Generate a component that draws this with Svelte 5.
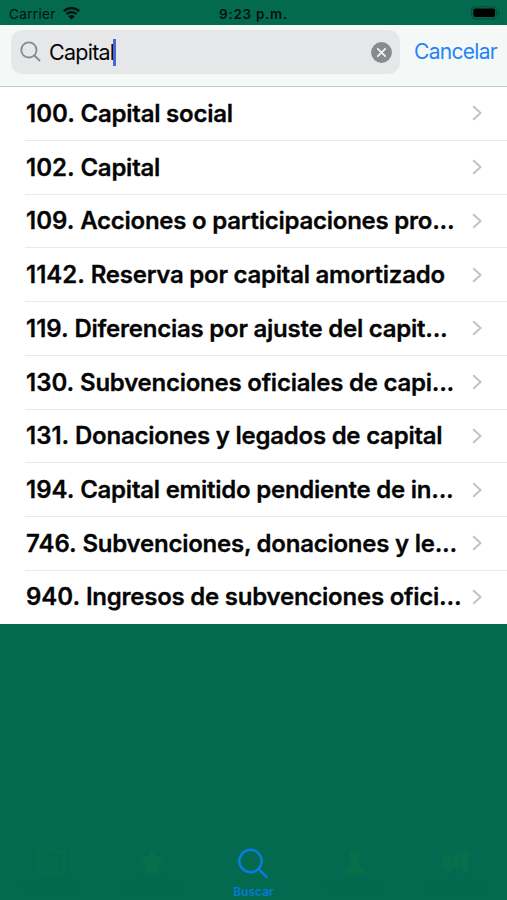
<script lang="ts">
	let query = 'Capital';

	const accounts = [
		{ code: '100.', name: 'Capital social' },
		{ code: '102.', name: 'Capital' },
		{ code: '109.', name: 'Acciones o participaciones pro...' },
		{ code: '1142.', name: 'Reserva por capital amortizado' },
		{ code: '119.', name: 'Diferencias por ajuste del capit...' },
		{ code: '130.', name: 'Subvenciones oficiales de capi...' },
		{ code: '131.', name: 'Donaciones y legados de capital' },
		{ code: '194.', name: 'Capital emitido pendiente de in...' },
		{ code: '746.', name: 'Subvenciones, donaciones y le...' },
		{ code: '940.', name: 'Ingresos de subvenciones ofici...' }
	];
</script>

<div class="screen">
	<header class="status">
		<div class="carrier">
			<span>Carrier</span>
			<svg width="19" height="14" viewBox="0 0 18 14">
				<path d="M1.3 5.2a11 11 0 0 1 15.4 0" />
				<path d="M4 8.2a7.2 7.2 0 0 1 10 0" />
				<path class="solid" d="M9 13.6 5.9 10.4a4.5 4.5 0 0 1 6.2 0z" />
			</svg>
		</div>
		<div class="time">9:23 p.m.</div>
		<svg class="battery" width="29" height="14" viewBox="0 0 29 14">
			<rect class="shell" x=".6" y=".8" width="25" height="12" rx="3.5" />
			<rect x="2.3" y="2.5" width="21.8" height="8.6" rx="2" />
			<path class="cap" d="M27 5v4q1.5-.7 1.5-2T27 5" />
		</svg>
	</header>

	<div class="searchbar">
		<div class="field">
			<svg class="glass" width="22" height="22" viewBox="0 0 22 22">
				<circle cx="8.9" cy="8.9" r="7.6" />
				<path d="m14.5 14.5 5 5" />
			</svg>
			<span class="query">{query}</span>
			<span class="caret"></span>
			<svg class="clear" width="21" height="21" viewBox="0 0 21 21">
				<circle cx="10.5" cy="10.5" r="10.4" />
				<path d="m6.8 6.8 7.4 7.4m0-7.4-7.4 7.4" />
			</svg>
		</div>
		<div class="cancel">Cancelar</div>
	</div>

	<ul class="results">
		{#each accounts as account}
			<li>
				<span class="account"><span class="code">{account.code}</span> {account.name}</span>
				<svg class="chevron" width="10" height="16" viewBox="0 0 10 16">
					<path d="m1.2 1.2 7.4 6.8-7.4 6.8" />
				</svg>
			</li>
		{/each}
	</ul>

	<nav class="tabs">
		<div class="tab">
			<svg width="34" height="34" viewBox="0 0 34 34">
				<path class="line" d="M4 5h26v22H4zM11 11v12m6-12v12m6-12v12" />
			</svg>
			<span class="hint"></span>
		</div>
		<div class="tab">
			<svg width="34" height="34" viewBox="0 0 34 34">
				<path d="m17 2 4.2 9 9.8 1-7.3 7 2 11L17 25l-8.7 5 2-11L3 12l9.8-1z" />
			</svg>
			<span class="hint"></span>
		</div>
		<div class="tab active">
			<svg width="34" height="34" viewBox="0 0 34 34">
				<circle cx="14.5" cy="15" r="11.2" />
				<path d="m22.7 23.2 8 8" />
			</svg>
			<span>Buscar</span>
		</div>
		<div class="tab">
			<svg width="34" height="34" viewBox="0 0 34 34">
				<circle cx="17" cy="10" r="6" />
				<path d="M14 14h6v6l9 5v3H4v-3l10-5z" />
			</svg>
			<span class="hint"></span>
		</div>
		<div class="tab">
			<svg width="34" height="34" viewBox="0 0 34 34">
				<path d="M3 10h9v12l2 4h-6l-2-5H3zM14 9l7-4v18l-7-2zM23 4h7v21h-7z" />
			</svg>
			<span class="hint"></span>
		</div>
	</nav>
</div>

<style>
	:global(body) {
		margin: 0;
	}

	.screen {
		display: flex;
		flex-direction: column;
		width: 507px;
		height: 900px;
		overflow: hidden;
		background: #03694f;
		color: #050505;
		font-family: Inter, 'Liberation Sans', sans-serif;
	}

	svg {
		display: block;
		flex: none;
	}

	.status {
		display: grid;
		grid-template-columns: 1fr auto 1fr;
		align-items: center;
		flex: none;
		height: 25px;
		padding: 2px 7px 0 9px;
		box-sizing: border-box;
		color: #02120d;
		font-size: 13.5px;
		line-height: 22px;
	}

	.carrier {
		display: flex;
		align-items: center;
		gap: 6px;
		letter-spacing: 0.35px;
	}

	.carrier svg {
		margin-top: -2px;
	}

	.carrier path {
		fill: none;
		stroke: #02120d;
		stroke-width: 2.3;
	}

	.carrier .solid {
		fill: #02120d;
		stroke: none;
	}

	.time {
		margin-left: -2px;
		font-weight: 600;
		letter-spacing: 0.7px;
	}

	.battery {
		justify-self: end;
		margin-top: -2px;
	}

	.battery .shell {
		fill: none;
		stroke: #034d3a;
	}

	.battery .cap {
		fill: #034d3a;
	}

	.searchbar {
		display: flex;
		align-items: flex-start;
		flex: none;
		height: 62px;
		padding: 5px 10px 0 11px;
		box-sizing: border-box;
		background: #f4f9f8;
		border-bottom: 1px solid #b5d1c7;
	}

	.field {
		display: flex;
		align-items: center;
		width: 389px;
		height: 44px;
		padding: 0 8px 0 9px;
		box-sizing: border-box;
		border-radius: 12px;
		background: #e6e7e9;
	}

	.glass {
		fill: none;
		stroke: #87898c;
		stroke-width: 1.8;
		stroke-linecap: round;
	}

	.query {
		margin-left: 7px;
		font-size: 21.5px;
		letter-spacing: -0.75px;
	}

	.caret {
		width: 2.5px;
		height: 27px;
		margin-left: -1px;
		background: #4169dc;
	}

	.clear {
		margin-left: auto;
		fill: #88898c;
	}

	.clear path {
		stroke: #f0f0f2;
		stroke-width: 1.8;
		stroke-linecap: round;
	}

	.cancel {
		margin-left: auto;
		color: #2584f5;
		font-size: 21px;
		line-height: 43px;
		letter-spacing: -0.7px;
	}

	.results {
		flex: none;
		margin: 0;
		padding: 0;
		list-style: none;
		background: #fff;
	}

	li {
		display: flex;
		align-items: center;
		justify-content: space-between;
		height: 53.75px;
		margin-left: 25px;
		padding: 0 25px 0 1px;
		box-sizing: border-box;
		border-bottom: 1px solid #e9e9eb;
	}

	li:last-child {
		height: 53.25px;
		border-bottom-color: transparent;
	}

	.account {
		font-size: 24px;
		font-weight: 600;
		letter-spacing: -0.24px;
		white-space: nowrap;
		-webkit-text-stroke: 0.3px #050505;
	}

	.code {
		letter-spacing: 0;
	}

	.chevron {
		fill: none;
		stroke: #c2c2c5;
		stroke-width: 2;
	}

	.tabs {
		display: grid;
		grid-template-columns: repeat(5, 1fr);
		margin-top: auto;
		height: 54px;
	}

	.tab {
		display: flex;
		flex-direction: column;
		align-items: center;
		color: #087c40;
		font-size: 12px;
	}

	.tab svg {
		fill: #07704a;
		filter: blur(1.5px);
	}

	.tab .line {
		fill: none;
		stroke: #077048;
		stroke-width: 2.5;
	}

	.hint {
		width: 50px;
		height: 6px;
		margin-top: 4px;
		background: #046b4d;
		filter: blur(2px);
	}

	.tab.active {
		color: #057bd5;
		font-weight: 600;
		line-height: 23px;
	}

	.active svg {
		fill: none;
		stroke: #087de0;
		stroke-width: 2.4;
		stroke-linecap: round;
		filter: none;
	}
</style>
